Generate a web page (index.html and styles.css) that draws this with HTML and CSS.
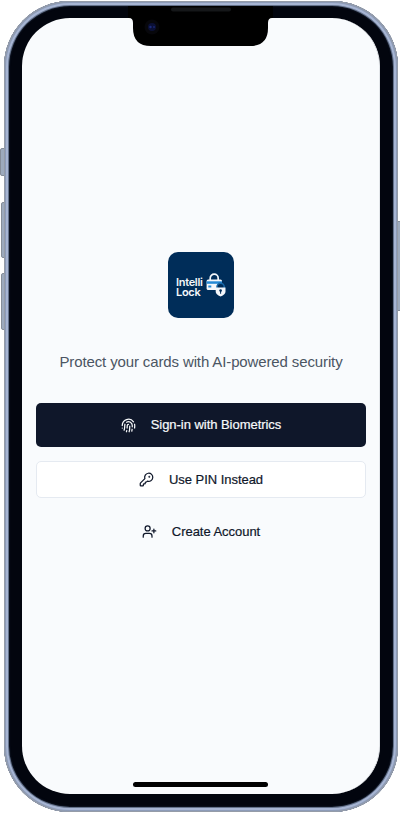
FILE: index.html
```html
<!DOCTYPE html>
<html lang="en">
<head>
<meta charset="utf-8">
<title>Intelli Lock</title>
<link rel="stylesheet" href="styles.css">
</head>
<body>
<div class="device">
  <span class="side-button mute"></span>
  <span class="side-button volume-up"></span>
  <span class="side-button volume-down"></span>
  <span class="side-button power"></span>
  <div class="frame">
    <main class="screen">
      <div class="logo">
        <div class="wordmark">Intelli<br>Lock</div>
        <svg class="logo-art" viewBox="0 0 20 24">
          <path d="M4.2 7V5.2a4 4 0 0 1 8 0V7" fill="none" stroke="#f4f7fb" stroke-width="1.7"/>
          <rect x=".6" y="6.5" width="15.4" height="10.5" rx="1.5" fill="#f4f7fb"/>
          <path d="M.6 8.3H16v2.5H.6z" fill="#2589d6"/>
          <path d="M2.3 12.5h3v2h-3z" fill="#2589d6"/>
          <path d="M11 15v-1.2a3.6 3.6 0 0 1 7.2 0V15" fill="#002d59" stroke="#1768a8" stroke-width="1.5"/>
          <path d="M9.7 14.5h9.8v4.2q0 2.7-4.9 4.8-4.9-2.1-4.9-4.8z" fill="#f4f7fb"/>
          <circle cx="14.6" cy="17.6" r="1.3" fill="#002d59"/>
          <path d="M14.1 18h1v2.7h-1z" fill="#002d59"/>
        </svg>
      </div>
      <p class="tagline">Protect your cards with AI-powered security</p>
      <button class="action primary">
        <svg class="icon" viewBox="0 0 24 24"><path d="M12 10a2 2 0 0 0-2 2c0 1.02-.1 2.51-.26 4"/><path d="M14 13.12c0 2.38 0 6.38-1 8.88"/><path d="M17.29 21.02c.12-.6.43-2.3.5-3.02"/><path d="M2 12a10 10 0 0 1 18-6"/><path d="M2 16h.01"/><path d="M21.8 16c.2-2 .131-5.354 0-6"/><path d="M5 19.5C5.5 18 6 15 6 12a6 6 0 0 1 .34-2"/><path d="M8.65 22c.21-.66.45-1.32.57-2"/><path d="M9 6.8a6 6 0 0 1 9 5.2v2"/></svg>
        <span>Sign-in with Biometrics</span>
      </button>
      <button class="action outline">
        <svg class="icon" viewBox="0 0 24 24"><path d="M2.586 17.414A2 2 0 0 0 2 18.828V21a1 1 0 0 0 1 1h3a1 1 0 0 0 1-1v-1a1 1 0 0 1 1-1h1a1 1 0 0 0 1-1v-1a1 1 0 0 1 1-1h.172a2 2 0 0 0 1.414-.586l.814-.814a6.5 6.5 0 1 0-4-4z"/><circle cx="16.5" cy="7.5" r=".5" fill="currentColor"/></svg>
        <span>Use PIN Instead</span>
      </button>
      <button class="action ghost">
        <svg class="icon" viewBox="0 0 24 24"><path d="M16 21v-2a4 4 0 0 0-4-4H6a4 4 0 0 0-4 4v2"/><circle cx="9" cy="7" r="4"/><path d="M19 8v6M22 11h-6"/></svg>
        <span>Create Account</span>
      </button>
    </main>
  </div>
  <svg class="notch" viewBox="0 0 145 40">
    <path d="M0 0H145V12H144Q140 12 140 17V22Q140 40 122 40H23Q5 40 5 22V17Q5 12 1 12H0Z" fill="#000"/>
    <rect x="43" y="1.5" width="60" height="4" rx="2" fill="#151719"/>
    <circle cx="24" cy="21" r="7.5" fill="#07070b"/>
    <circle cx="24" cy="21" r="4" fill="#0b1036"/>
    <circle cx="22.5" cy="21" r="1.2" fill="#1b2a78"/>
    <circle cx="26" cy="21" r="1.1" fill="#18246b"/>
  </svg>
  <span class="home-bar"></span>
</div>
</body>
</html>
```
FILE: styles.css
```css
* { box-sizing: border-box; }
body {
  margin: 0;
  background: #fff;
  font-family: "Liberation Sans", Arial, sans-serif;
  overflow: hidden;
}
.device {
  position: relative;
  width: 400px;
  height: 815px;
  padding: 1px 2px 3px 4px;
}
.frame {
  position: relative;
  height: 811px;
  padding: 17px 18px;
  border-radius: 66px;
  background: #02050e;
  box-shadow: inset 0 0 0 1px #959ca8, inset 0 0 0 2px #8c9bb8, inset 0 0 0 4px #a7b5d3, inset 0 0 0 5px #64728b, inset 0 0 2px 5px #273247;
}
.screen {
  display: flex;
  flex-direction: column;
  align-items: center;
  height: 776px;
  padding: 234px 13px 0 14px;
  border-right: 1px solid #e3e6ea;
  border-radius: 48px;
  background: #f9fbfd;
}
.logo {
  display: flex;
  align-items: center;
  width: 66px;
  height: 66px;
  padding-left: 8px;
  border-radius: 10px;
  background: #002d59;
}
.wordmark {
  flex: none;
  width: 30px;
  padding-top: 4px;
  color: #f4f7fb;
  font: 600 11px/10px Inter, sans-serif;
  letter-spacing: -.3px;
}
.logo-art {
  flex: none;
  width: 20px;
  height: 24px;
}
.tagline {
  margin: 34px 0 0;
  color: #4b5563;
  font-size: 15px;
  line-height: 20px;
  letter-spacing: -.125px;
  white-space: nowrap;
}
.action {
  display: flex;
  align-items: center;
  justify-content: center;
  gap: 15px;
  width: 330px;
  padding: 0;
  border: 0;
  border-radius: 5px;
  background: transparent;
  color: #0f172a;
  font: 13px/18px "Liberation Sans", Arial, sans-serif;
  letter-spacing: -.04px;
  -webkit-text-stroke: .2px currentColor;
  white-space: nowrap;
}
.primary {
  height: 44px;
  margin-top: 31px;
  background: #0f172a;
  color: #f8fafc;
}
.outline {
  height: 37px;
  margin-top: 14px;
  border: 1px solid #e5eaf1;
  background: #fff;
}
.ghost {
  height: 37px;
  margin-top: 15px;
}
.icon {
  width: 15px;
  height: 15px;
  fill: none;
  stroke: currentColor;
  stroke-width: 2;
  stroke-linecap: round;
  stroke-linejoin: round;
}
.side-button {
  position: absolute;
  left: 1px;
  width: 5px;
  border: 1px solid #858d99;
  border-radius: 2px 0 0 2px;
  background: #9daabd;
}
.mute { top: 148px; left: 0; height: 28px; }
.volume-up { top: 202px; height: 56px; }
.volume-down { top: 273px; height: 57px; }
.power {
  top: 221px;
  left: 396px;
  width: 6px;
  height: 90px;
  border-radius: 0;
}
.notch {
  position: absolute;
  top: 6px;
  left: 128px;
  width: 145px;
  height: 40px;
}
.home-bar {
  position: absolute;
  top: 782px;
  left: 133px;
  width: 135px;
  height: 5px;
  border-radius: 3px;
  background: #000;
}
```
